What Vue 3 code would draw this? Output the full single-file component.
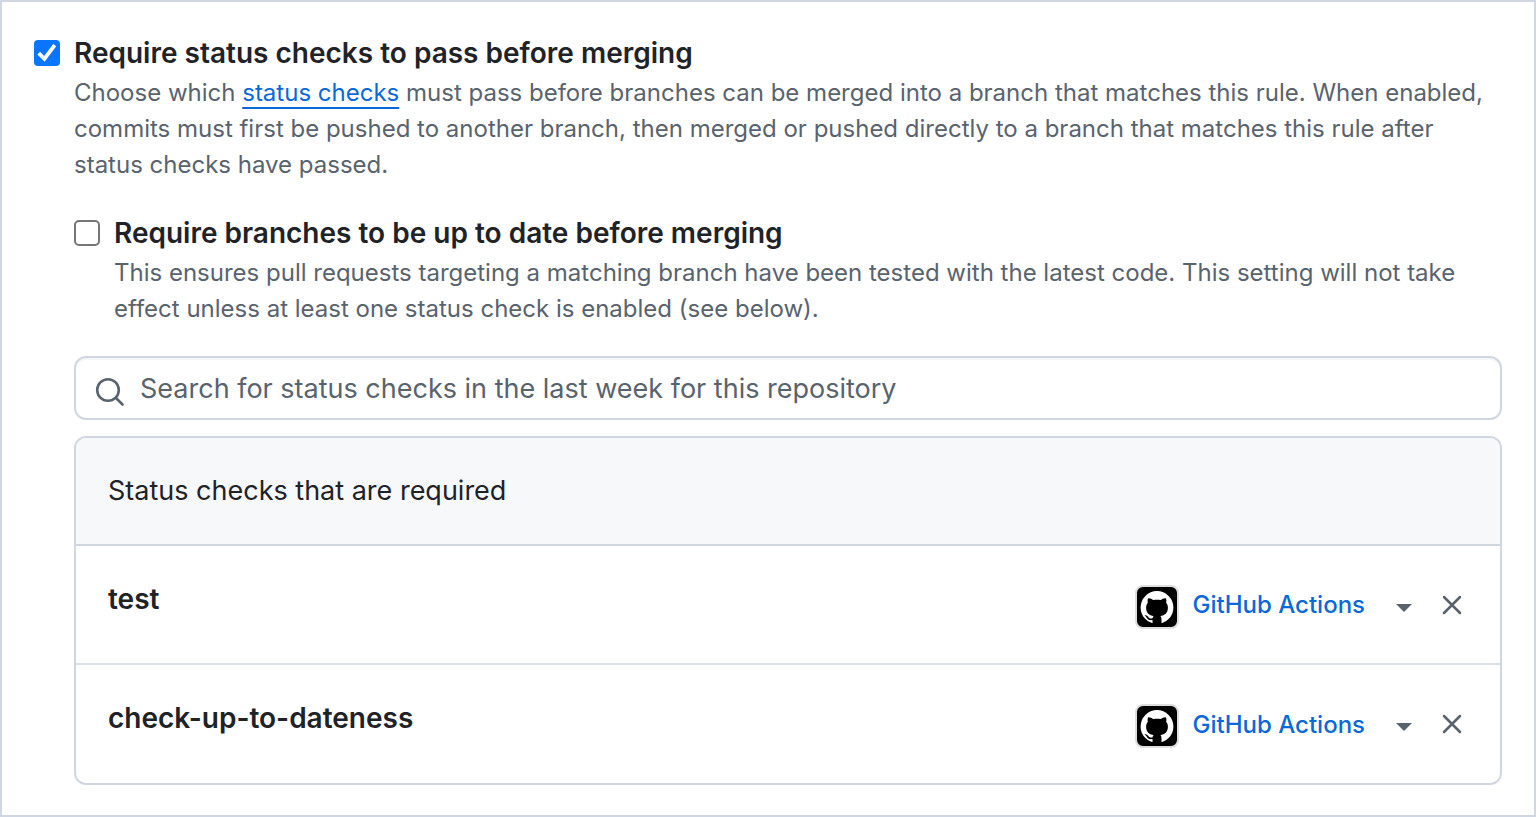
<script setup>
const checks = ['test', 'check-up-to-dateness']
</script>

<template>
  <main class="panel">
    <div class="option">
      <input id="require" type="checkbox" class="box" checked>
      <div class="body">
        <label for="require" class="title">Require status checks to pass before merging</label>
        <p class="note">Choose which <a href="#">status checks</a> must pass before branches can be merged into a branch that matches this rule. When enabled, commits must first be pushed to another branch, then merged or pushed directly to a branch that matches this rule after status checks have passed.</p>
        <div class="option nested">
          <input id="uptodate" type="checkbox" class="box">
          <div class="body">
            <label for="uptodate" class="title">Require branches to be up to date before merging</label>
            <p class="note">This ensures pull requests targeting a matching branch have been tested with the latest code. This setting will not take effect unless at least one status check is enabled (see below).</p>
          </div>
        </div>
        <div class="search">
          <svg class="lens" viewBox="0 0 32 32" aria-hidden="true"><circle cx="14" cy="14" r="10.8" /><path d="M22 22l6.5 6.5" /></svg>
          <input type="text" aria-label="Search status checks" placeholder="Search for status checks in the last week for this repository">
        </div>
        <section class="list">
          <header>Status checks that are required</header>
          <div v-for="check in checks" :key="check" class="row">
            <strong>{{ check }}</strong>
            <button type="button" class="app">
              <span class="avatar">
                <svg viewBox="0 0 40 40" aria-hidden="true">
                  <circle cx="20" cy="20.5" r="16.4" fill="#fff" />
                  <path fill="#000" d="M11.200 11.200c1.800-.2 3.800.9 5.100 1.800 2.400-.5 5-.5 7.400 0 1.300-.9 3.300-2 5.100-1.800.8 1.700.7 3.300.3 4.500 1.200 1.300 1.800 2.900 1.800 4.800 0 5.700-3.100 7.900-7.500 8.500.8.800 1.100 1.900 1.100 3.200V38h-9v-4.900c-3.500.5-4.900-.7-5.900-2.600-.5-1-1.300-1.700-2.100-2.100 1.700-.4 3 .5 4 1.800.9 1.100 2.300 1.600 4.100 1 .1-1 .5-1.700 1-2.200-4.400-.6-7.500-2.800-7.500-8.500 0-1.900.6-3.500 1.800-4.800-.4-1.200-.5-2.800.3-4.500Z" />
                </svg>
              </span>
              <span>GitHub Actions</span>
              <span class="caret"></span>
            </button>
            <button type="button" class="remove" :aria-label="'Remove ' + check">
              <svg viewBox="0 0 20 20" aria-hidden="true"><path d="M2 2 18 18M18 2 2 18" /></svg>
            </button>
          </div>
        </section>
      </div>
    </div>
  </main>
</template>

<style scoped>
* { box-sizing: border-box; }
.panel {
  min-height: 100vh;
  padding: 32px 32px 30px;
  border: 2px solid #d0d7e2;
  background: #fff;
  color: #1f2328;
  font-family: Inter, "Liberation Sans", sans-serif;
  font-size: 27px;
}
.option { display: flex; align-items: flex-start; gap: 14px; }
.nested { margin-top: 31px; }
.body { flex: 1; min-width: 0; }
.box {
  appearance: none;
  flex: none;
  width: 26px;
  height: 26px;
  margin: 6px 0 0;
  border: 2px solid #767676;
  border-radius: 5px;
  background: #fff;
}
.box:checked {
  border: 0;
  border-radius: 4px;
  background: #0a75ff url("data:image/svg+xml,%3Csvg xmlns='http://www.w3.org/2000/svg' viewBox='0 0 26 26'%3E%3Cpath d='M4.700 13.200l5.700 5.600L20.700 5.200' fill='none' stroke='white' stroke-width='3.800'/%3E%3C/svg%3E");
}
.title { display: block; font-size: 28px; font-weight: 600; line-height: 39px; }
.note { margin: 2px 0 0; color: #59636e; font-size: 24px; line-height: 36px; }
.note a { color: #0969da; text-decoration: underline; text-decoration-thickness: 2px; text-underline-offset: 6px; }
.search {
  display: flex;
  align-items: center;
  gap: 14px;
  height: 64px;
  margin-top: 29px;
  padding: 0 18px;
  border: 2px solid #d0d7e0;
  border-radius: 12px;
  box-shadow: inset 0 2px 0 #f5f6f8;
}
.lens { flex: none; width: 32px; height: 32px; margin-top: 8px; fill: none; stroke: #59636e; stroke-width: 2.6; stroke-linecap: round; }
.search input { flex: 1; min-width: 0; padding: 0; border: 0; outline: 0; background: none; font: inherit; }
.search input::placeholder { color: #59636e; opacity: 1; }
.list { margin-top: 16px; border: 2px solid #d0d7e0; border-radius: 12px; overflow: hidden; }
header { padding: 32px; background: #f6f8fa; line-height: 42px; }
.row { display: flex; align-items: center; height: 119px; padding: 0 32px; border-top: 2px solid #dce1e7; }
header + .row { border-top-color: #d0d7e0; }
.row:last-child { height: 120px; }
.row strong { flex: 1; padding-bottom: 12px; font-size: 28px; font-weight: 600; }
button { border: 0; padding: 0; background: none; font: inherit; cursor: pointer; }
.app { display: flex; align-items: center; gap: 14px; color: #0969da; font-size: 24px; font-weight: 500; }
.avatar { display: flex; margin-top: 4px; border: 2px solid #dedede; border-radius: 8px; background: #000; overflow: hidden; }
.avatar svg { width: 40px; height: 40px; }
.caret { margin: 6px 0 0 17px; border: 8px solid transparent; border-top-color: #59636e; border-bottom: 0; }
.remove { display: flex; margin: 0 6px 0 30px; }
.remove svg { width: 20px; height: 20px; fill: none; stroke: #59636e; stroke-width: 2.5; stroke-linecap: round; }
</style>
